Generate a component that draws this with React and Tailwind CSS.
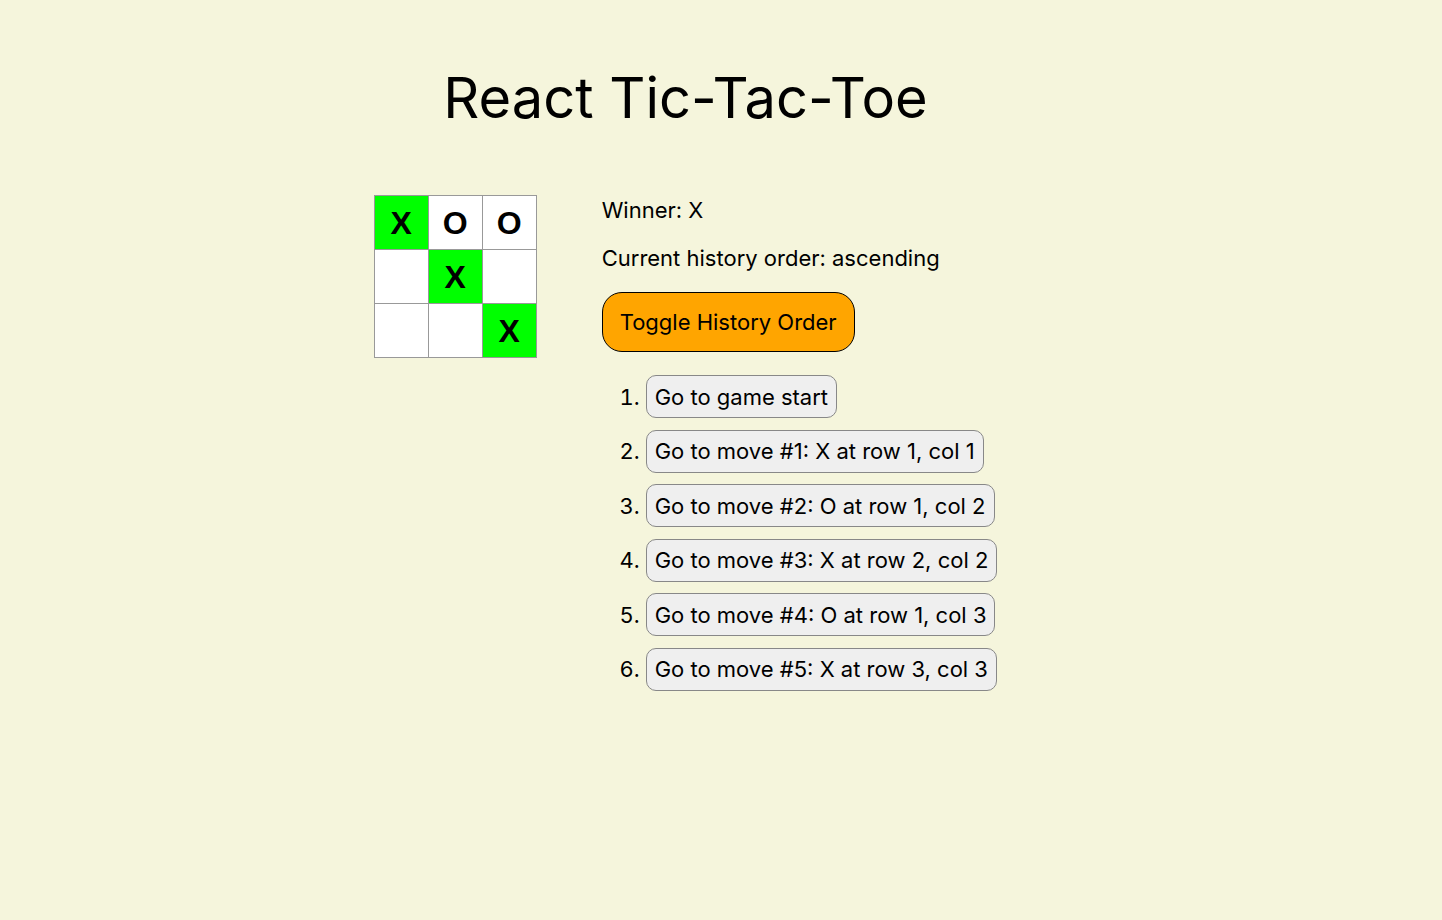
const SQUARES = ["X", "O", "O", null, "X", null, null, null, "X"];
const WIN = [0, 4, 8];

const MOVES = [
  "Go to game start",
  "Go to move #1: X at row 1, col 1",
  "Go to move #2: O at row 1, col 2",
  "Go to move #3: X at row 2, col 2",
  "Go to move #4: O at row 1, col 3",
  "Go to move #5: X at row 3, col 3",
];

function Square({ value, win }) {
  return (
    <button
      className={`-mt-px -ml-px w-[55px] h-[55px] border border-[#999] flex items-center justify-center text-[32px] font-bold leading-none font-['Liberation_Sans',Arial,sans-serif] ${
        win ? "bg-[#00ff00]" : "bg-white"
      }`}
    >
      {value}
    </button>
  );
}

export default function App() {
  return (
    <div className="min-h-screen w-full bg-[#f5f5dc] text-black font-['Inter',sans-serif]">
      <div className="w-[1371px] flex flex-col items-center">
        {/* Title */}
        <h1 className="text-[56px] leading-none mt-[70px] mb-0">React Tic-Tac-Toe</h1>

        {/* Game */}
        <div className="flex flex-row items-start gap-[65px] mt-[69px]">
          <div className="grid grid-cols-3 pt-px pl-px">
            {SQUARES.map((v, i) => (
              <Square key={i} value={v} win={WIN.includes(i)} />
            ))}
          </div>

          <div className="flex flex-col items-start mt-[1px]">
            <div className="text-[22px] leading-[28px]">Winner: X</div>
            <div className="text-[22px] leading-[28px] mt-[20px]">Current history order: ascending</div>
            <button className="mt-[20px] h-[60px] px-[17px] bg-[#ffa500] border border-black rounded-[20px] text-[22px]">
              Toggle History Order
            </button>
            <ol className="list-decimal pl-[44px] mt-[23px] text-[22px] flex flex-col gap-[11.6px]">
              {MOVES.map((m) => (
                <li key={m}>
                  <button className="h-[43px] px-[8px] bg-[#efefef] border border-[#888] rounded-[10px] text-[22px] leading-none">
                    {m}
                  </button>
                </li>
              ))}
            </ol>
          </div>
        </div>
      </div>
    </div>
  );
}
